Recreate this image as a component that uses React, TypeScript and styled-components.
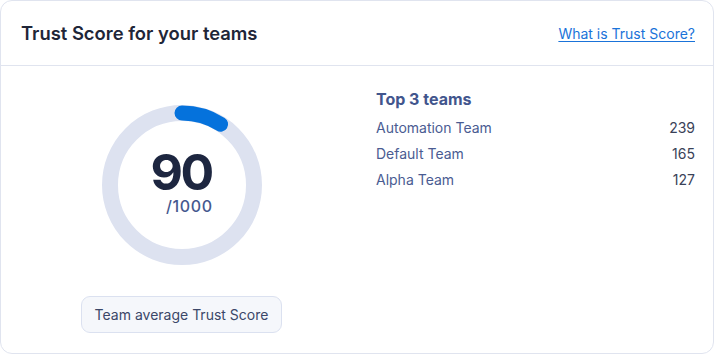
import React from "react";
import styled, { createGlobalStyle } from "styled-components";

const Global = createGlobalStyle`
  html, body { margin: 0; padding: 0; background: #ffffff; }
  body { font-family: Inter, "Noto Sans", "DejaVu Sans", sans-serif; }
  * { box-sizing: border-box; }
`;

const Card = styled.section`
  width: 714px;
  height: 354px;
  border: 1px solid #e0e4ef;
  border-radius: 12px;
  background: #fff;
  display: flex;
  flex-direction: column;
  overflow: hidden;
`;

const Header = styled.header`
  height: 65px;
  flex: none;
  display: flex;
  align-items: center;
  justify-content: space-between;
  padding: 0 18px 0 20px;
  border-bottom: 1px solid #e0e4ef;
`;

const Title = styled.h2`
  margin: 0;
  font-size: 18.4px;
  font-weight: 600;
  color: #1f2638;
`;

const HelpLink = styled.a`
  font-size: 14px;
  color: #1a73d9;
  text-decoration: underline;
  text-underline-offset: 2px;
  cursor: pointer;
`;

const Body = styled.div`
  flex: 1;
  display: flex;
  gap: 34px;
  padding: 0 18px 0 20px;
`;

const ScoreColumn = styled.div`
  width: 321px;
  flex: none;
  display: flex;
  flex-direction: column;
  align-items: center;
  padding-top: 39px;
`;

const RingWrap = styled.div`
  position: relative;
  width: 160px;
  height: 160px;
`;

const RingCenter = styled.div`
  position: absolute;
  inset: 0;
  display: flex;
  align-items: center;
  justify-content: center;
`;

const ScoreStack = styled.div`
  display: inline-flex;
  flex-direction: column;
  align-items: flex-end;
  margin-top: -4px;
`;

const ScoreValue = styled.span`
  font-size: 50px;
  font-weight: 700;
  line-height: 42px;
  color: #1d2640;
  letter-spacing: -2.5px;
  margin-right: 1px;
`;

const ScoreMax = styled.span`
  font-size: 16px;
  font-weight: 500;
  line-height: 18px;
  color: #46598f;
  letter-spacing: 0.6px;
  margin-top: 4px;
`;

const Pill = styled.div`
  margin-top: 31px;
  height: 37px;
  padding: 0 13px;
  display: flex;
  align-items: center;
  border: 1px solid #dbe1f0;
  border-radius: 9px;
  background: #f5f7fb;
  font-size: 14px;
  color: #3b4768;
`;

const TeamsColumn = styled.div`
  flex: 1;
  padding-top: 23px;
`;

const TeamsTitle = styled.h3`
  margin: 0 0 5px;
  font-size: 16px;
  line-height: 20px;
  font-weight: 700;
  color: #42558d;
`;

const TeamRow = styled.div`
  display: flex;
  justify-content: space-between;
  align-items: center;
  height: 26px;
  font-size: 14px;
  color: #4a5c92;
`;

const TeamScore = styled.span`
  color: #3a4258;
`;

const RADIUS = 72;
const CIRC = 2 * Math.PI * RADIUS;

function Ring({ value, max }: { value: number; max: number }) {
  const len = (value / max) * CIRC;
  return (
    <svg width="160" height="160" viewBox="0 0 160 160">
      <circle cx="80" cy="80" r={RADIUS} fill="none" stroke="#dde2f0" strokeWidth="16" />
      <circle
        cx="80"
        cy="80"
        r={RADIUS}
        fill="none"
        stroke="#0572dc"
        strokeWidth="15"
        strokeLinecap="round"
        strokeDasharray={`${len} ${CIRC}`}
        transform="rotate(-90 80 80)"
      />
    </svg>
  );
}

const teams = [
  { name: "Automation Team", score: 239 },
  { name: "Default Team", score: 165 },
  { name: "Alpha Team", score: 127 },
];

export default function App() {
  return (
    <>
      <Global />
      <Card>
        <Header>
          <Title>Trust Score for your teams</Title>
          <HelpLink>What is Trust Score?</HelpLink>
        </Header>
        <Body>
          <ScoreColumn>
            <RingWrap>
              <Ring value={90} max={1000} />
              <RingCenter>
                <ScoreStack>
                  <ScoreValue>90</ScoreValue>
                  <ScoreMax>/1000</ScoreMax>
                </ScoreStack>
              </RingCenter>
            </RingWrap>
            <Pill>Team average Trust Score</Pill>
          </ScoreColumn>
          <TeamsColumn>
            <TeamsTitle>Top 3 teams</TeamsTitle>
            {teams.map((t) => (
              <TeamRow key={t.name}>
                <span>{t.name}</span>
                <TeamScore>{t.score}</TeamScore>
              </TeamRow>
            ))}
          </TeamsColumn>
        </Body>
      </Card>
    </>
  );
}
